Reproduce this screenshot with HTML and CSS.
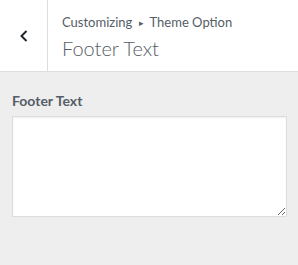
FILE: index.html
```html
<!DOCTYPE html>
<html lang="en">
  <head>
    <meta charset="UTF-8" />
    <title>Footer Text</title>
    <link rel="stylesheet" href="styles.css">
  </head>
  <body>
    <div class="section-header">
      <button type="button" class="back-button" aria-label="Back">
        <svg width="10" height="14" viewBox="0 0 10 14">
          <path d="M7.5 2 L2.5 7 L7.5 12" fill="none" stroke="#23282d" stroke-width="2" />
        </svg>
      </button>
      <div class="section-title">
        <span class="breadcrumb">Customizing <span class="sep">▸</span> Theme Option</span>
        <h3>Footer Text</h3>
      </div>
    </div>

    <div class="control">
      <label class="control-label" for="footerText">Footer Text</label>
      <textarea id="footerText" class="control-textarea" rows="5"></textarea>
    </div>
  </body>
</html>
```

FILE: styles.css
```css
* {
  margin: 0;
  padding: 0;
  box-sizing: border-box;
}

body {
  font-family: Lato, "Open Sans", sans-serif;
  background: #eeeeee;
  color: #555d66;
  height: 100vh;
}

.section-header {
  display: flex;
  height: 72px;
  background: white;
  border-bottom: 1px solid #dddddd;
}

.back-button {
  width: 48px;
  background: white;
  border: none;
  border-right: 1px solid #dddddd;
  display: flex;
  align-items: center;
  justify-content: center;
  padding-top: 1px;
  cursor: pointer;
}

.section-title {
  padding: 11px 14px 0;
  display: flex;
  flex-direction: column;
}

.breadcrumb {
  font-size: 13px;
  line-height: 22px;
  color: #555d66;
}

.breadcrumb .sep {
  font-size: 9px;
  vertical-align: 1px;
  margin: 0 3px;
}

.section-title h3 {
  font-size: 20px;
  font-weight: 300;
  line-height: 28px;
  color: #555d66;
}

.control {
  padding: 20px 12px;
}

.control-label {
  display: block;
  font-size: 14px;
  font-weight: 700;
  line-height: 18px;
  margin-bottom: 6px;
}

.control-textarea {
  display: block;
  width: 275px;
  height: 101px;
  border: 1px solid #dddddd;
  box-shadow: inset 0 1px 2px rgba(0, 0, 0, 0.07);
  background: white;
  font-family: inherit;
  font-size: 14px;
  padding: 2px 6px;
}
```
